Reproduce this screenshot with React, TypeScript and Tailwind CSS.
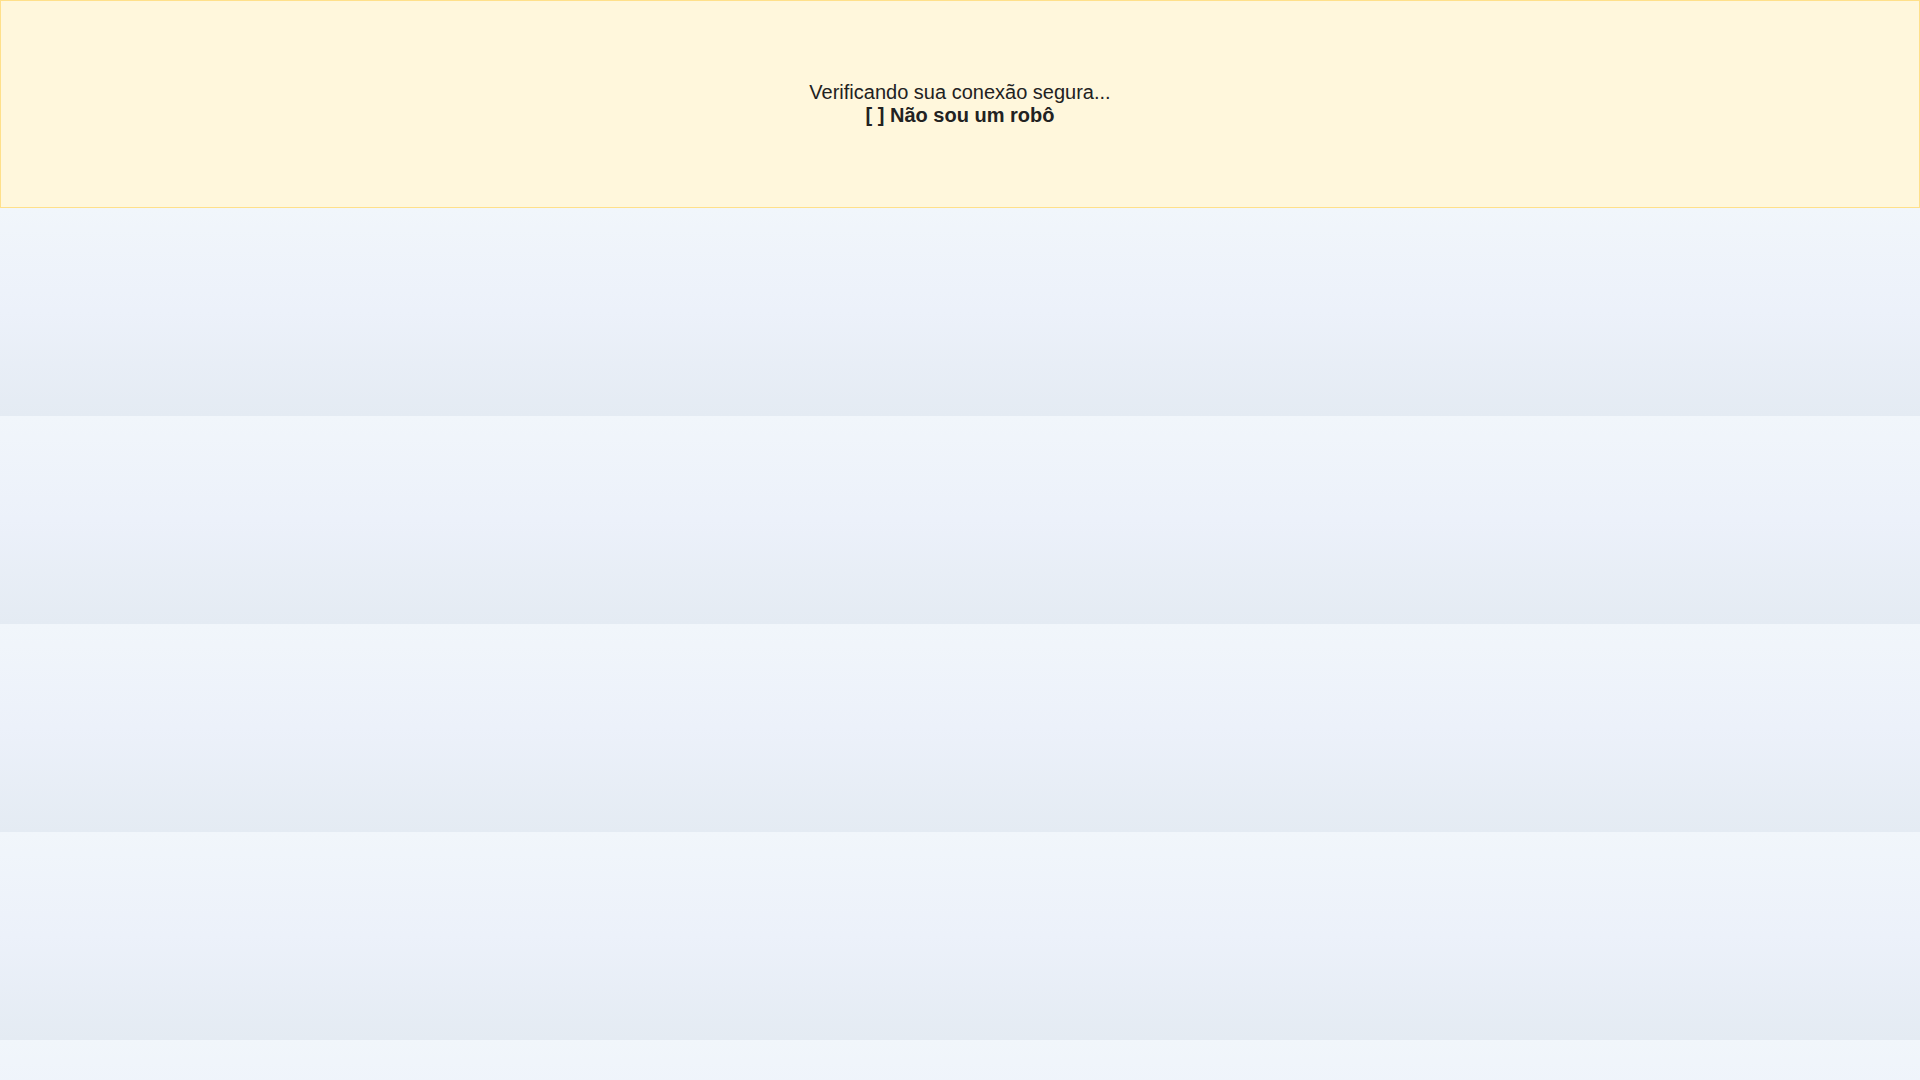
export default function App() {
  return (
    <div className="min-h-[1080px] w-full bg-[linear-gradient(to_bottom,#f1f6fb,#ecf1fa_50%,#e4ebf3)] bg-[length:100%_208px] bg-repeat-y font-['Liberation_Sans',Arial,sans-serif]">
      <div className="h-[208px] border border-[#ffe08a] bg-[#fff7dc] flex flex-col items-center justify-center text-center text-[20px] leading-[23px] text-[#222222]">
        <div>Verificando sua conexão segura...</div>
        <div className="font-bold">[ ] Não sou um robô</div>
      </div>
    </div>
  );
}
